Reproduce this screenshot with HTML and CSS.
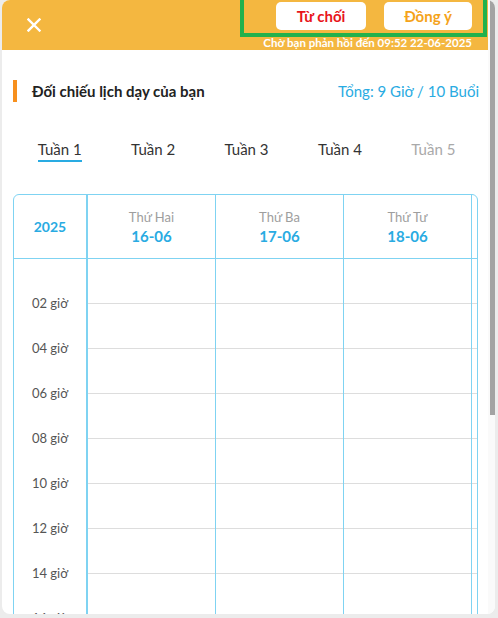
FILE: index.html
```html
<!DOCTYPE html>
<html lang="vi">

<head>
    <meta charset="UTF-8">
    <meta name="viewport" content="width=device-width, initial-scale=1.0">
    <title>Đối chiếu lịch dạy</title>
    <link rel="stylesheet" href="styles.css">
</head>

<body>

    <!-- Schedule confirm modal -->
    <div class="modal">
        <div class="modal-scroll">

            <div class="modal-header">
                <button class="btn-close" aria-label="Đóng">
                    <svg width="14" height="14" viewBox="0 0 14 14">
                        <path d="M1.5 1.5 L12.5 12.5 M12.5 1.5 L1.5 12.5" stroke="#fff" stroke-width="2.4" stroke-linecap="square" fill="none" />
                    </svg>
                </button>
                <div class="header-actions">
                    <div class="action-buttons">
                        <button class="btn-reject">Từ chối</button>
                        <button class="btn-accept">Đồng ý</button>
                    </div>
                    <div class="deadline">Chờ bạn phản hồi đến 09:52 22-06-2025</div>
                </div>
                <div class="highlight-box"></div>
            </div>

            <div class="modal-body">
                <div class="title-row">
                    <h3 class="title">Đối chiếu lịch dạy của bạn</h3>
                    <span class="total">Tổng: 9 Giờ / 10 Buổi</span>
                </div>

                <div class="week-tabs">
                    <div class="week-tab"><span class="active">Tuần 1</span></div>
                    <div class="week-tab"><span>Tuần 2</span></div>
                    <div class="week-tab"><span>Tuần 3</span></div>
                    <div class="week-tab"><span>Tuần 4</span></div>
                    <div class="week-tab"><span class="disabled">Tuần 5</span></div>
                </div>

                <div class="calendar">
                    <div class="cal-time">
                        <div class="cal-corner">2025</div>
                        <div class="hour-list">
                            <div class="hour">02 giờ</div>
                            <div class="hour">04 giờ</div>
                            <div class="hour">06 giờ</div>
                            <div class="hour">08 giờ</div>
                            <div class="hour">10 giờ</div>
                            <div class="hour">12 giờ</div>
                            <div class="hour">14 giờ</div>
                            <div class="hour">16 giờ</div>
                            <div class="hour">18 giờ</div>
                            <div class="hour">20 giờ</div>
                            <div class="hour">22 giờ</div>
                        </div>
                    </div>
                    <div class="cal-days" id="calDays"></div>
                </div>
            </div>

        </div>

        <!-- scrollbar of the modal body -->
        <div class="scrollbar">
            <div class="scrollbar-thumb"></div>
        </div>
    </div>

    <script>
        // Build the day columns
        const days = [
            { name: 'Thứ Hai', date: '16-06' },
            { name: 'Thứ Ba', date: '17-06' },
            { name: 'Thứ Tư', date: '18-06' },
            { name: 'Thứ Năm', date: '19-06' }
        ];

        const calDays = document.getElementById('calDays');
        days.forEach(function (day) {
            const col = document.createElement('div');
            col.className = 'day';

            let html = '<div class="day-head"><div class="day-name">' + day.name +
                '</div><div class="day-date">' + day.date + '</div></div>';
            for (let i = 0; i < 12; i++) {
                html += '<div class="slot"></div>';
            }
            col.innerHTML = html;
            calDays.appendChild(col);
        });
    </script>

</body>

</html>
```

FILE: styles.css
```css
/* General Styles */
html,
body {
    margin: 0;
    padding: 0;
    background-color: #ececec;
    font-family: Lato, "Noto Sans", Arial, sans-serif;
}

* {
    box-sizing: border-box;
}

.modal {
    position: relative;
    margin-left: 2px;
    width: 493px;
    height: 614px;
    background: #ffffff;
    border-radius: 8px;
    overflow: hidden;
}

.modal-scroll {
    width: 486px;
    height: 100%;
    overflow: hidden;
}

.scrollbar {
    position: absolute;
    top: 0;
    right: 0;
    bottom: 0;
    width: 7px;
    background: #fafafa;
}

.scrollbar-thumb {
    margin-left: 2px;
    width: 5px;
    height: 415px;
    background: #a3a3a3;
}

/* Header */
.modal-header {
    position: relative;
    height: 50px;
    background-color: #f4b740;
    display: flex;
    justify-content: space-between;
    padding: 0 16px 0 23px;
}

.btn-close {
    background: none;
    border: none;
    padding: 0;
    margin-top: 16px;
    width: 18px;
    height: 18px;
    display: flex;
    align-items: center;
    justify-content: center;
    cursor: pointer;
}

.header-actions {
    display: flex;
    flex-direction: column;
    align-items: flex-end;
}

.action-buttons {
    display: flex;
    gap: 18px;
    margin-top: 2px;
}

.action-buttons button {
    width: 88px;
    height: 28px;
    border: none;
    border-radius: 5px;
    background: #ffffff;
    font-family: inherit;
    font-size: 15px;
    font-weight: 700;
    cursor: pointer;
}

.btn-reject {
    color: #e8141b;
    width: 90px !important;
}

.btn-accept {
    color: #f5a31a;
}

.deadline {
    margin-top: 6px;
    font-size: 11.5px;
    line-height: 13px;
    font-weight: 700;
    color: #ffffff;
}

.highlight-box {
    position: absolute;
    left: 238px;
    top: -4px;
    width: 247px;
    height: 41px;
    border: 4px solid #22b14c;
}

/* Body */
.modal-body {
    padding: 30px 10px 110px 11px;
}

.title-row {
    display: flex;
    align-items: center;
    justify-content: space-between;
    height: 22px;
    border-left: 4px solid #f7901e;
    margin-right: -1px;
}

.title {
    margin: 0 0 0 15px;
    font-size: 15px;
    font-weight: 700;
    color: #222222;
}

.total {
    font-size: 15px;
    color: #29abe2;
}

.week-tabs {
    display: flex;
    margin-top: 37px;
    margin-right: -2px;
}

.week-tab {
    flex: 1;
    text-align: center;
}

.week-tab span {
    display: inline-block;
    font-size: 15px;
    line-height: 20px;
    color: #333333;
    padding-bottom: 1px;
    border-bottom: 2px solid transparent;
}

.week-tab span.active {
    border-bottom-color: #29abe2;
}

.week-tab span.disabled {
    color: #a9a9a9;
}

/* Calendar */
.calendar {
    display: flex;
    margin-top: 32px;
    border: 1px solid #7fd3f2;
    border-radius: 6px;
    overflow: hidden;
}

.cal-time {
    width: 74px;
    flex-shrink: 0;
    border-right: 2px solid #7fd3f2;
}

.cal-corner {
    height: 64px;
    border-bottom: 1px solid #7fd3f2;
    display: flex;
    align-items: center;
    justify-content: center;
    font-size: 14px;
    font-weight: 700;
    color: #29abe2;
}

.hour-list {
    padding-top: 22px;
    height: 540px;
    overflow: hidden;
}

.hour {
    height: 45px;
    line-height: 45px;
    text-align: center;
    font-size: 13px;
    color: #555555;
}

.cal-days {
    flex: 1;
    display: flex;
    overflow: hidden;
}

.day {
    width: 128px;
    flex-shrink: 0;
    border-right: 1px solid #7fd3f2;
}

.day-head {
    height: 64px;
    border-bottom: 1px solid #7fd3f2;
    display: flex;
    flex-direction: column;
    align-items: center;
    justify-content: center;
}

.day-name {
    font-size: 13px;
    line-height: 18px;
    color: #9e9e9e;
}

.day-date {
    font-size: 15px;
    line-height: 20px;
    font-weight: 700;
    color: #29abe2;
}

.slot {
    height: 45px;
    border-bottom: 1px solid #dddddd;
}
```
